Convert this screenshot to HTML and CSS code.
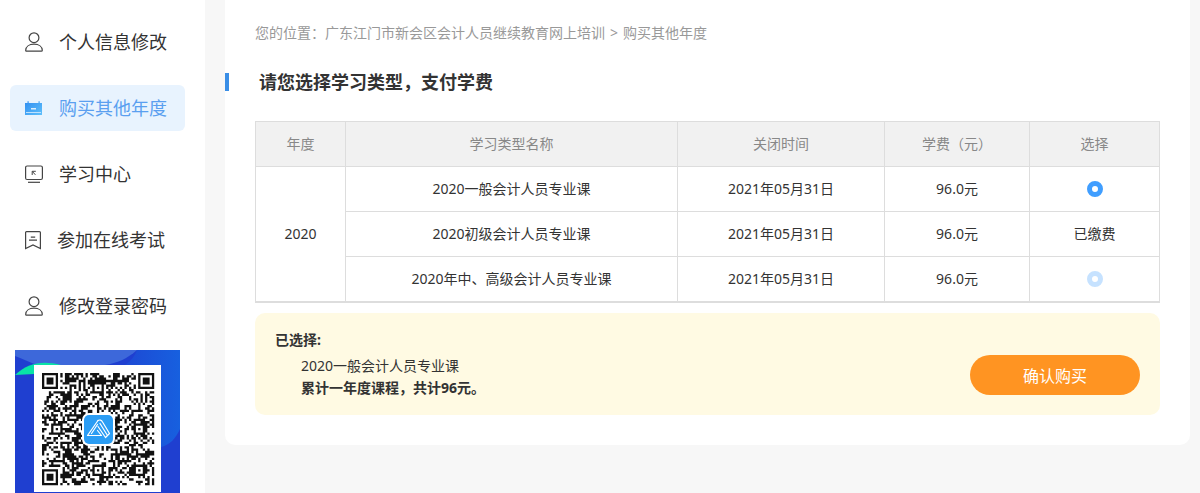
FILE: index.html
```html
<!DOCTYPE html>
<html lang="zh-CN">

<head>
    <meta charset="UTF-8">
    <meta name="viewport" content="width=device-width, initial-scale=1.0">
    <title>购买其他年度</title>
    <link rel="stylesheet" href="styles.css">
</head>

<body>
    <div class="page">
        <aside class="sidebar">
            <nav class="menu">
                <a href="#" class="menu-item">
                    <svg class="icon" width="18" height="20" viewBox="0 0 18 20">
                        <circle cx="9" cy="5.7" r="4.9" />
                        <path d="M.7 18.200C.9 14.800 4 12.200 9 12.200s8.100 2.600 8.300 6c0 .7-.3 1-1 1H1.700c-.7 0-1-.3-1-1z" />
                    </svg>
                    <span>个人信息修改</span>
                </a>
                <a href="#" class="menu-item active">
                    <svg width="18" height="20" viewBox="0 0 18 20">
                        <defs>
                            <linearGradient id="calendar" x1="0" y1="0" x2="1" y2="1">
                                <stop offset="0" stop-color="#2f8df0" />
                                <stop offset="1" stop-color="#5fc0fb" />
                            </linearGradient>
                        </defs>
                        <path fill="url(#calendar)" d="M0 5h2.500V3.300h1.200V5h9.800V3.300h1.200V5H17v12H0z" />
                        <path stroke="#fff" stroke-width="1.2" d="M6 10.800h5" />
                        <path stroke="#bfe1fd" d="M1 14.500h15" />
                    </svg>
                    <span>购买其他年度</span>
                </a>
                <a href="#" class="menu-item">
                    <svg class="icon" width="18" height="20" viewBox="0 0 18 20">
                        <rect x=".6" y="2" width="16.8" height="13.5" rx="1.5" />
                        <path d="M3 18.300h12" />
                        <path stroke-width="1" d="M7.200 11V7.300h3.600M7.400 7.500l3 3.300" />
                    </svg>
                    <span>学习中心</span>
                </a>
                <a href="#" class="menu-item">
                    <svg class="icon" width="16" height="20" viewBox="0 0 16 20">
                        <path d="M1.500 1.700h13c.6 0 .9.300.9.900v16L8 15 .6 18.600v-16c0-.6.300-.9.900-.9z" />
                        <path d="M5.800 7.200h4.400M4 10.200h8" />
                    </svg>
                    <span>参加在线考试</span>
                </a>
                <a href="#" class="menu-item">
                    <svg class="icon" width="18" height="20" viewBox="0 0 18 20">
                        <circle cx="9" cy="5.7" r="4.9" />
                        <path d="M.7 18.200C.9 14.800 4 12.200 9 12.200s8.100 2.600 8.300 6c0 .7-.3 1-1 1H1.700c-.7 0-1-.3-1-1z" />
                    </svg>
                    <span>修改登录密码</span>
                </a>
            </nav>

            <svg class="qr-banner" viewBox="0 0 165 143" role="img" aria-label="二维码">
                <defs>
                    <linearGradient id="wave" x1="0" y1="0" x2="1" y2="0">
                        <stop offset="0" stop-color="#1d49d4" />
                        <stop offset="1" stop-color="#1760df" />
                    </linearGradient>
                </defs>
                <rect width="165" height="143" fill="#1f3fd0" />
                <path fill="url(#wave)" d="M122 0h43v79c-4 9-10 16-19 18V15h-36c6-4 10-9 12-15z" />
                <path fill="#3d68da" d="M0 0h122c-10 9-20 13-32 15H19C12 15 6 13 0 9z" />
                <path fill="#1f3fd0" d="M0 6c8 3 14 6 22 9L0 25z" />
                <path fill="#09e3a7" d="M0 25c12-12 28-15 46-10l-27 9z" />
                <rect x="19" y="15" width="127" height="127" fill="#fff" />
                <path id="qrModules" fill="#111" transform="translate(27 23) scale(2.29)" />
                <rect x="67" y="63" width="33" height="33" rx="7" fill="#fff" />
                <rect x="69" y="65" width="29" height="29" rx="5" fill="#2b9df4" />
                <g fill="none" stroke="#fff" stroke-width="1.2" stroke-linejoin="round" stroke-linecap="round">
                    <path d="M83 70.500L72.500 85.500h14l-4-5" />
                    <path d="M83 70.500c1.500-1 3.500-.5 4.500 1.500l7 11.500-4 4-7.500-11" />
                    <path d="M85 73.500l7.500 12M82.500 74.500l-6 9" />
                </g>
            </svg>
        </aside>

        <main class="content">
            <div class="panel">
                <div class="breadcrumb">
                    <span>您的位置：<a href="#">广东江门市新会区会计人员继续教育网上培训</a></span>
                    <span>&gt;</span>
                    <a href="#">购买其他年度</a>
                </div>
                <h1 class="title">请您选择学习类型，支付学费</h1>

                <form class="buy-form">
                    <table class="course-table">
                        <colgroup>
                            <col class="col-year">
                            <col>
                            <col class="col-date">
                            <col class="col-fee">
                            <col class="col-pick">
                        </colgroup>
                        <thead>
                            <tr>
                                <th>年度</th>
                                <th>学习类型名称</th>
                                <th>关闭时间</th>
                                <th>学费（元）</th>
                                <th>选择</th>
                            </tr>
                        </thead>
                        <tbody>
                            <tr>
                                <td rowspan="3">2020</td>
                                <td><label for="course1">2020一般会计人员专业课</label></td>
                                <td>2021年05月31日</td>
                                <td>96.0元</td>
                                <td><input type="radio" id="course1" name="course" checked></td>
                            </tr>
                            <tr>
                                <td>2020初级会计人员专业课</td>
                                <td>2021年05月31日</td>
                                <td>96.0元</td>
                                <td>已缴费</td>
                            </tr>
                            <tr>
                                <td><label for="course3">2020年中、高级会计人员专业课</label></td>
                                <td>2021年05月31日</td>
                                <td>96.0元</td>
                                <td><input type="radio" id="course3" name="course" disabled></td>
                            </tr>
                        </tbody>
                    </table>

                    <div class="summary">
                        <div class="summary-text">
                            <h2>已选择:</h2>
                            <p>2020一般会计人员专业课</p>
                            <p><strong>累计一年度课程，共计96元。</strong></p>
                        </div>
                        <button type="submit" class="btn-buy">确认购买</button>
                    </div>
                </form>
            </div>
        </main>
    </div>

    <script src="qrcode.js"></script>
</body>

</html>
```

FILE: styles.css
```css
/* Reset */
* {
    margin: 0;
    padding: 0;
    box-sizing: border-box;
}

body {
    font-family: "Noto Sans", "Noto Sans CJK SC", sans-serif;
    font-size: 14px;
    line-height: 22px;
    color: #333;
    background-color: #f7f7f7;
}

a {
    color: inherit;
    text-decoration: none;
}

.page {
    display: flex;
    min-height: 100vh;
}

/* Sidebar */
.sidebar {
    width: 205px;
    flex-shrink: 0;
    padding-top: 19px;
    background: #fff;
}

.menu {
    display: flex;
    flex-direction: column;
    gap: 20px;
    padding: 0 20px 0 10px;
}

.menu-item {
    display: flex;
    align-items: center;
    gap: 16px;
    height: 46px;
    padding-left: 15px;
    border-radius: 6px;
    font-size: 18px;
}

.menu-item.active {
    background: #e8f3fe;
    color: #5a9ff0;
}

.icon {
    fill: none;
    stroke: #444;
    stroke-width: 1.2;
}

.qr-banner {
    display: block;
    width: 165px;
    margin: 21px 0 0 15px;
}

/* Content */
.content {
    flex: 1;
    padding: 0 10px 0 20px;
}

.panel {
    padding: 22px 30px 30px;
    background: #fff;
    border-radius: 0 0 10px 10px;
}

.breadcrumb {
    display: flex;
    gap: 5px;
    color: #999;
}

.title {
    margin: 29px 0 30px -30px;
    padding-left: 30px;
    border-left: 4px solid #3a8ee6;
    font-size: 18px;
    line-height: 18px;
}

/* Course table */
.course-table {
    width: 100%;
    table-layout: fixed;
    border-collapse: collapse;
    border-bottom: 2px solid #ddd;
}

.col-year {
    width: 90px;
}

.col-date {
    width: 207px;
}

.col-fee {
    width: 145px;
}

.col-pick {
    width: 130px;
}

.course-table th,
.course-table td {
    height: 45px;
    border: 1px solid #ddd;
    text-align: center;
    vertical-align: middle;
}

.course-table th {
    background: #f1f1f1;
    color: #888;
    font-weight: normal;
}

input[type="radio"] {
    display: block;
    width: 16px;
    height: 16px;
    margin: 0 auto;
    appearance: none;
    background: #fff;
    border: 5px solid #409eff;
    border-radius: 50%;
}

input[type="radio"]:disabled {
    border-color: #c6e2ff;
}

/* Summary */
.summary {
    display: flex;
    justify-content: space-between;
    align-items: flex-end;
    margin-top: 10px;
    padding: 16px 20px;
    background: #fffae3;
    border-radius: 10px;
}

.summary h2 {
    margin-bottom: 4px;
    font-size: 14px;
}

.summary p {
    padding-left: 26px;
}

.btn-buy {
    width: 170px;
    height: 40px;
    margin-bottom: 4px;
    border: none;
    border-radius: 20px;
    background: #ff9422;
    color: #fff;
    font-family: inherit;
    font-size: 16px;
    cursor: pointer;
}
```

FILE: qrcode.js
```js
const SIZE = 49;
const FINDERS = [[0, 0], [SIZE - 7, 0], [0, SIZE - 7]];
const ALIGNS = [[24, 6], [6, 24], [42, 24], [24, 42], [42, 42]];

let seed = 20200531;

function nextBit() {
    seed = (seed * 1103515245 + 12345) % 2147483648;
    return (seed >> 16) % 2 === 0;
}

function isDark(x, y) {
    const bit = nextBit();

    for (const [fx, fy] of FINDERS) {
        const d = Math.max(Math.abs(x - fx - 3), Math.abs(y - fy - 3));
        if (d <= 4) return d !== 2 && d !== 4;
    }
    for (const [ax, ay] of ALIGNS) {
        const d = Math.max(Math.abs(x - ax), Math.abs(y - ay));
        if (d <= 2) return d !== 1;
    }
    // timing lines
    if (y === 6) return x % 2 === 0;
    if (x === 6) return y % 2 === 0;
    return bit;
}

let path = '';
for (let y = 0; y < SIZE; y++) {
    for (let x = 0; x < SIZE; x++) {
        if (isDark(x, y)) path += `M${x} ${y}h1v1h-1z`;
    }
}
document.getElementById('qrModules').setAttribute('d', path);
```
